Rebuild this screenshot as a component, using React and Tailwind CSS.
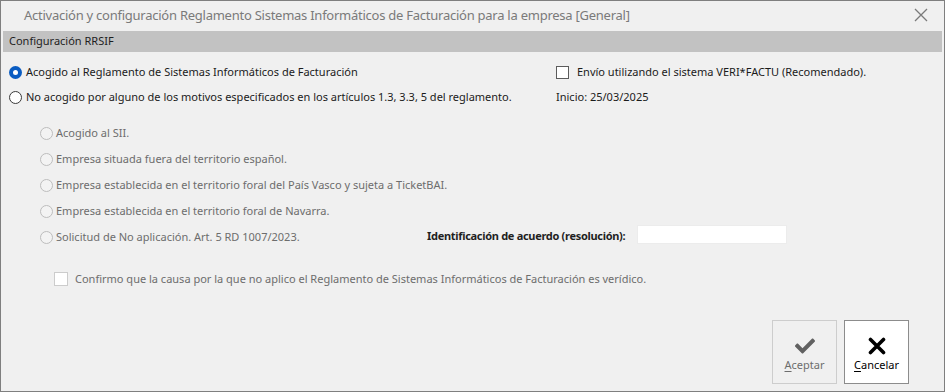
import React from "react";
import { FaCheck } from "react-icons/fa";

const FONT = { fontFamily: "'Noto Sans', 'Open Sans', sans-serif" };

function Radio({ state }) {
  if (state === "checked") {
    return (
      <span className="w-[13px] h-[13px] rounded-full bg-[#0a5cc2] flex items-center justify-center shrink-0">
        <span className="w-[5px] h-[5px] rounded-full bg-white" />
      </span>
    );
  }
  if (state === "disabled") {
    return <span className="w-[13px] h-[13px] rounded-full border border-[#bdbdbd] bg-[#f3f3f3] shrink-0" />;
  }
  return <span className="w-[13px] h-[13px] rounded-full border border-[#3a3a3a] bg-white shrink-0" />;
}

function SubRadio({ children, className = "" }) {
  return (
    <div className={"h-[26px] flex items-center gap-[3px] text-[#6d6d6d] " + className}>
      <Radio state="disabled" />
      <span className="whitespace-nowrap">{children}</span>
    </div>
  );
}

export default function App() {
  return (
    <div
      className="w-[945px] h-[392px] bg-[#f0f0f0] border border-[#7f7f7f] flex flex-col text-[11px] text-[#1b1b1b] overflow-hidden"
      style={FONT}
    >
      {/* Title bar */}
      <div className="h-[30px] shrink-0 flex items-center pl-[23px] pr-[16px]">
        <span className="text-[13px] tracking-[-0.25px] text-[#7a7a7a] whitespace-nowrap flex-1">
          Activación y configuración Reglamento Sistemas Informáticos de Facturación para la empresa [General]
        </span>
        <svg width="14" height="14" viewBox="0 0 14 14" className="mb-[2px]">
          <path d="M1 1 L13 13 M13 1 L1 13" stroke="#7a7a7a" strokeWidth="1.3" />
        </svg>
      </div>

      {/* Section bar */}
      <div className="mx-[2px] h-[21px] shrink-0 bg-[#c2c2c2] flex items-center pl-[6px] text-[#1e1e1e]">
        Configuración RRSIF
      </div>

      {/* Content */}
      <div className="flex-1 flex flex-col pl-[8px] pt-[8px]">
        <div className="flex">
          <div className="w-[547px] flex flex-col">
            <div className="h-[25px] flex items-center gap-[4px]">
              <Radio state="checked" />
              <span className="whitespace-nowrap">Acogido al Reglamento de Sistemas Informáticos de Facturación</span>
            </div>
            <div className="h-[25px] flex items-center gap-[4px]">
              <Radio state="off" />
              <span className="whitespace-nowrap">
                No acogido por alguno de los motivos especificados en los artículos 1.3, 3.3, 5 del reglamento.
              </span>
            </div>
          </div>
          <div className="flex flex-col">
            <div className="h-[25px] flex items-center gap-[8px]">
              <span className="w-[13px] h-[13px] border border-[#5c5c5c] bg-white shrink-0" />
              <span className="whitespace-nowrap">Envío utilizando el sistema VERI*FACTU (Recomendado).</span>
            </div>
            <div className="h-[25px] flex items-center">
              <span className="whitespace-nowrap">Inicio: 25/03/2025</span>
            </div>
          </div>
        </div>

        <div className="flex flex-col pl-[31px] mt-[10px]">
          <SubRadio>Acogido al SII.</SubRadio>
          <SubRadio>Empresa situada fuera del territorio español.</SubRadio>
          <SubRadio>Empresa establecida en el territorio foral del País Vasco y sujeta a TicketBAI.</SubRadio>
          <SubRadio>Empresa establecida en el territorio foral de Navarra.</SubRadio>
          <div className="flex items-center">
            <SubRadio className="w-[387px]">Solicitud de No aplicación. Art. 5 RD 1007/2023.</SubRadio>
            <span className="w-[198px] font-bold tracking-[-0.3px] text-[#1f1f1f] whitespace-nowrap mb-[2px]">
              Identificación de acuerdo (resolución):
            </span>
            <span className="ml-[12px] w-[150px] h-[19px] bg-white border border-[#ececec] mb-[5px]" />
          </div>
        </div>

        <div className="flex items-center gap-[7px] pl-[45px] mt-[19px] h-[20px] text-[#6d6d6d]">
          <span className="w-[14px] h-[14px] border border-[#cccccc] bg-white shrink-0" />
          <span className="whitespace-nowrap">
            Confirmo que la causa por la que no aplico el Reglamento de Sistemas Informáticos de Facturación es verídico.
          </span>
        </div>

        <div className="mt-auto mb-[7px] flex justify-end gap-[7px] pr-[35px]">
          <div className="w-[65px] h-[64px] border border-[#cdcdcd] bg-[#f0f0f0] flex flex-col items-center pt-[14px]">
            <div className="h-[22px] flex items-center">
              <FaCheck size={20} color="#616161" />
            </div>
            <span className="leading-[16px] text-[#6d6d6d]">
              <span className="underline underline-offset-2">A</span>ceptar
            </span>
          </div>
          <div className="w-[65px] h-[64px] border border-[#8c8c8c] bg-white flex flex-col items-center pt-[14px]">
            <div className="h-[22px] flex items-center">
              <svg width="18" height="18" viewBox="0 0 18 18">
                <path d="M2.5 2.5 L15.5 15.5 M15.5 2.5 L2.5 15.5" stroke="#000" strokeWidth="3.6" strokeLinecap="round" />
              </svg>
            </div>
            <span className="leading-[16px] text-black">
              <span className="underline underline-offset-2">C</span>ancelar
            </span>
          </div>
        </div>
      </div>
    </div>
  );
}
